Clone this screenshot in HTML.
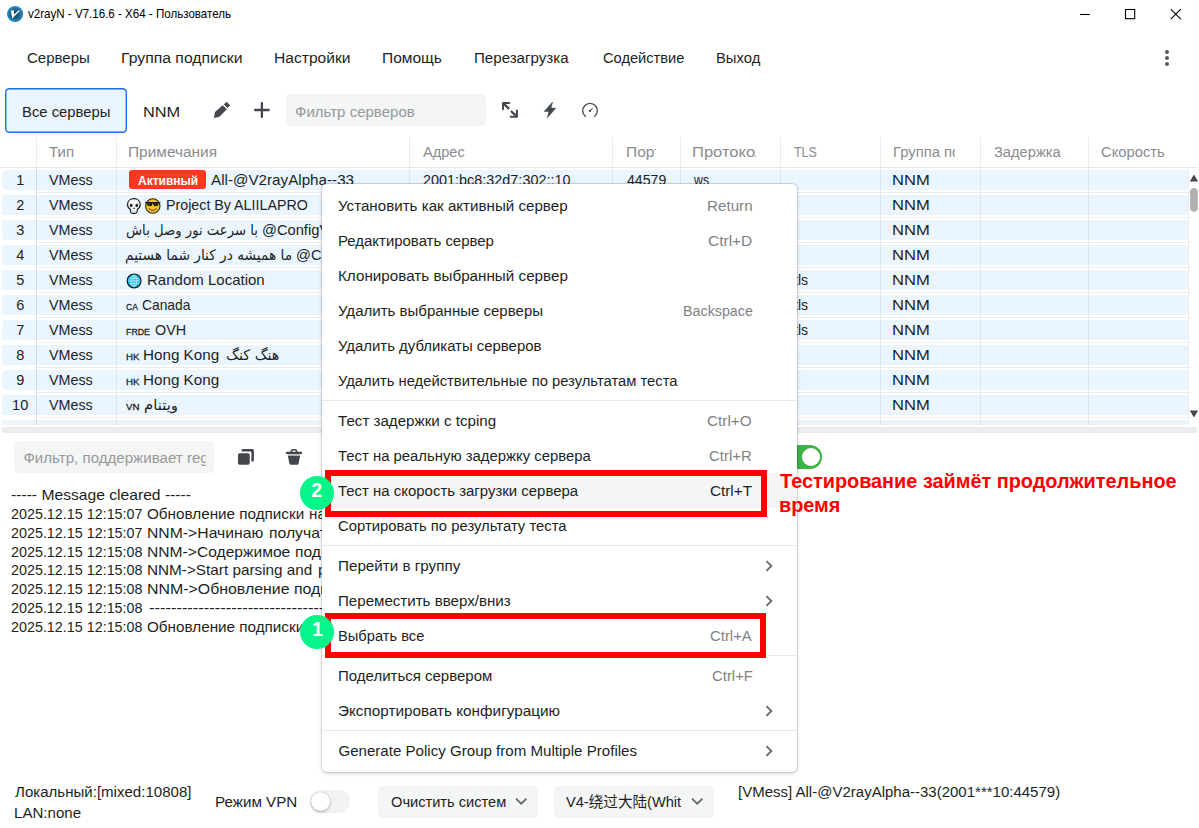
<!DOCTYPE html>
<html lang="ru"><head><meta charset="utf-8"><title>v2rayN</title>
<style>
html,body{margin:0;padding:0;}
body{width:1199px;height:828px;overflow:hidden;background:#fff;position:relative;font-family:"Liberation Sans", "DejaVu Sans", "Noto Sans CJK SC", sans-serif;color:#1c1f23;}
.t{position:absolute;white-space:nowrap;line-height:1;transform-origin:0 50%;}
.abs{position:absolute;}
.row{position:absolute;left:2px;width:1185.7px;height:19.9px;background:#eaf5ff;border-radius:3px;}
.hl{position:absolute;left:37px;width:1152px;height:1px;background:#ededee;}
.vl{position:absolute;top:137px;width:1px;height:30px;background:#ebebec;}
.clip{position:absolute;overflow:hidden;}
.mi{position:absolute;left:0;width:475px;height:35px;}
.sep{position:absolute;left:0;width:475px;height:1px;background:#e8e8e9;}
svg{position:absolute;overflow:visible;}
</style></head><body>
<svg style="left:6.9px;top:5.9px" width="16.2" height="16.2" viewBox="0 0 16.2 16.2"><defs><radialGradient id="g1" cx="50%" cy="50%" r="50%"><stop offset="0" stop-color="#123f5c"/><stop offset="0.55" stop-color="#1d628a"/><stop offset="1" stop-color="#2f93c8"/></radialGradient></defs><circle cx="8.1" cy="8.1" r="8.1" fill="url(#g1)"/><path d="M3.9 4.6 L7 4.3 L7 8.6 L11.6 4.4 L13.2 4.6 L5.2 12.6 Z" fill="#fff"/></svg><span class="t" style="left:27.70px;top:9.05px;font-size:11.90px;color:#000;transform:scaleX(0.9728);">v2rayN - V7.16.6 - X64 - Пользователь</span><svg style="left:1080px;top:9px" width="102" height="11"><path d="M0 5.5H10" stroke="#000" stroke-width="1.1" fill="none"/><rect x="45.5" y="0.5" width="9.2" height="9.2" stroke="#000" stroke-width="1.1" fill="none"/><path d="M90.8 0.2L100.8 10.2M100.8 0.2L90.8 10.2" stroke="#000" stroke-width="1.1" fill="none"/></svg><span class="t" style="left:27.00px;top:49.95px;font-size:15.10px;color:#1c1f23;transform:scaleX(0.9948);">Серверы</span><span class="t" style="left:120.95px;top:49.95px;font-size:15.10px;color:#1c1f23;transform:scaleX(1.0450);">Группа подписки</span><span class="t" style="left:273.97px;top:49.95px;font-size:15.10px;color:#1c1f23;transform:scaleX(1.0334);">Настройки</span><span class="t" style="left:381.97px;top:49.95px;font-size:15.10px;color:#1c1f23;transform:scaleX(1.0273);">Помощь</span><span class="t" style="left:474.00px;top:49.95px;font-size:15.10px;color:#1c1f23;">Перезагрузка</span><span class="t" style="left:602.50px;top:49.95px;font-size:15.10px;color:#1c1f23;transform:scaleX(0.9700);">Содействие</span><span class="t" style="left:715.52px;top:49.95px;font-size:15.10px;color:#1c1f23;transform:scaleX(0.9807);">Выход</span><svg style="left:1164px;top:49px" width="6" height="18"><circle cx="3" cy="3" r="2" fill="#555a60"/><circle cx="3" cy="9" r="2" fill="#555a60"/><circle cx="3" cy="15" r="2" fill="#555a60"/></svg><div class="abs" style="left:5.3px;top:88px;width:121.4px;height:45px;box-shadow:inset 0 0 0 1.4px #1a6cf0;border-radius:4.5px;background:#eaf5ff"></div><span class="t" style="left:21.52px;top:103.95px;font-size:15.10px;color:#1c1f23;transform:scaleX(0.9810);">Все серверы</span><span class="t" style="left:142.92px;top:103.95px;font-size:15.10px;color:#1c1f23;transform:scaleX(1.0823);">NNM</span><svg style="left:205px;top:92px" width="30" height="30" viewBox="205 92 30 30"><path fill="#43474c" d="M213.9 117.95L215 112.05L222.75 105.3L226.9 109.25L219.4 116.75Z"/><path fill="#43474c" stroke="#43474c" stroke-width="1" stroke-linejoin="round" d="M224.35 104.35L226.7 102.3L229.65 105.3L227.5 107.55Z"/></svg><svg style="left:253px;top:101px" width="18" height="18" viewBox="0 0 18 18"><path d="M2.1 9H15.7M8.9 2.1V15.9" stroke="#43474c" stroke-width="2.3" stroke-linecap="round" fill="none"/></svg><div class="abs" style="left:286px;top:94px;width:200px;height:31.5px;background:#f4f5f5;border-radius:4px"></div><span class="t" style="left:295.30px;top:103.95px;font-size:15.10px;color:#96999c;transform:scaleX(0.9953);">Фильтр серверов</span><svg style="left:498px;top:98px" width="24" height="24" viewBox="498 98 24 24"><g stroke="#43474c" fill="none" stroke-linejoin="round" stroke-linecap="round"><path d="M503.05 109.2V103.05H509.2" stroke-width="1.95"/><path d="M510.7 116.75H516.95V110.5" stroke-width="1.95"/><path d="M503.6 103.6L509.1 108.8M510.9 111L516.4 116.2" stroke-width="2.3" stroke-linecap="butt"/></g></svg><svg style="left:540px;top:100px" width="20" height="20" viewBox="540 100 20 20"><polygon fill="#43474c" stroke="#43474c" stroke-width="0.5" stroke-linejoin="round" points="552.6,102.1 544.1,111.4 548.9,111.5 547.3,117.8 555.8,108.2 551,108.1"/></svg><svg style="left:580px;top:100px" width="20" height="20" viewBox="580 100 20 20"><path d="M585.34 116.34A7.3 7.3 0 1 1 594.72 116.34" stroke="#43474c" stroke-width="1.35" fill="none" stroke-linecap="round"/><circle cx="589.9" cy="110.9" r="1.05" fill="#43474c"/><path d="M589.4 110.4L593.8 107L590.4 111.4Z" fill="#43474c"/></svg><span class="t" style="left:49.00px;top:144.55px;font-size:14.90px;color:#8a8c8f;transform:scaleX(1.0097);">Тип</span><span class="t" style="left:127.96px;top:144.55px;font-size:14.90px;color:#8a8c8f;transform:scaleX(1.0364);">Примечания</span><span class="t" style="left:422.70px;top:144.55px;font-size:14.90px;color:#8a8c8f;transform:scaleX(0.9795);">Адрес</span><div class="clip" style="left:620px;top:140px;width:36.3px;height:26px"><span class="t" style="left:5.66px;top:4.55px;font-size:14.90px;color:#8a8c8f;transform:scaleX(1.0413);">Порт</span></div><div class="clip" style="left:686px;top:140px;width:70px;height:26px"><span class="t" style="left:5.89px;top:4.55px;font-size:14.90px;color:#8a8c8f;transform:scaleX(1.1101);">Протокол</span></div><span class="t" style="left:793.70px;top:144.55px;font-size:14.90px;color:#8a8c8f;transform:scaleX(0.8365);">TLS</span><div class="clip" style="left:886px;top:140px;width:68.7px;height:26px"><span class="t" style="left:6.61px;top:4.55px;font-size:14.90px;color:#8a8c8f;transform:scaleX(0.9949);">Группа подписки</span></div><span class="t" style="left:993.60px;top:144.55px;font-size:14.90px;color:#8a8c8f;transform:scaleX(0.9864);">Задержка</span><span class="t" style="left:1101.00px;top:144.55px;font-size:14.90px;color:#8a8c8f;transform:scaleX(0.9916);">Скорость</span><div class="hl" style="top:166.7px;background:#e6e7e8;left:0;width:1198px"></div><div class="vl" style="left:36px"></div><div class="vl" style="left:116px"></div><div class="vl" style="left:409px"></div><div class="vl" style="left:612px"></div><div class="vl" style="left:680px"></div><div class="vl" style="left:780px"></div><div class="vl" style="left:880px"></div><div class="vl" style="left:980px"></div><div class="vl" style="left:1088px"></div><div class="clip" style="left:0;top:168px;width:1189.5px;height:256.8px"><div class="row" style="top:2.0px"></div><div class="hl" style="top:24.0px"></div><div class="row" style="top:27.0px"></div><div class="hl" style="top:49.0px"></div><div class="row" style="top:52.0px"></div><div class="hl" style="top:74.0px"></div><div class="row" style="top:77.0px"></div><div class="hl" style="top:99.0px"></div><div class="row" style="top:102.0px"></div><div class="hl" style="top:124.0px"></div><div class="row" style="top:127.0px"></div><div class="hl" style="top:149.0px"></div><div class="row" style="top:152.0px"></div><div class="hl" style="top:174.0px"></div><div class="row" style="top:177.0px"></div><div class="hl" style="top:199.0px"></div><div class="row" style="top:202.0px"></div><div class="hl" style="top:224.0px"></div><div class="row" style="top:227.0px"></div><div class="hl" style="top:249.0px"></div><div class="row" style="top:252.0px"></div><div class="hl" style="top:274.0px"></div><div class="abs" style="left:36px;top:0;width:1px;height:258px;background:rgba(28,31,35,0.13)"></div><div class="abs" style="left:116px;top:0;width:1px;height:258px;background:rgba(28,31,35,0.07)"></div><div class="abs" style="left:409px;top:0;width:1px;height:258px;background:rgba(28,31,35,0.07)"></div><div class="abs" style="left:612px;top:0;width:1px;height:258px;background:rgba(28,31,35,0.07)"></div><div class="abs" style="left:680px;top:0;width:1px;height:258px;background:rgba(28,31,35,0.07)"></div><div class="abs" style="left:780px;top:0;width:1px;height:258px;background:rgba(28,31,35,0.07)"></div><div class="abs" style="left:880px;top:0;width:1px;height:258px;background:rgba(28,31,35,0.07)"></div><div class="abs" style="left:980px;top:0;width:1px;height:258px;background:rgba(28,31,35,0.07)"></div><div class="abs" style="left:1088px;top:0;width:1px;height:258px;background:rgba(28,31,35,0.07)"></div><div class="abs" style="left:1188px;top:0;width:1px;height:258px;background:rgba(28,31,35,0.09)"></div><span class="t" style="left:0.20px;top:4.75px;font-size:14.50px;color:#1c1f23;width:40px;text-align:center;">1</span><span class="t" style="left:49.00px;top:4.75px;font-size:14.50px;color:#1c1f23;transform:scaleX(0.9872);">VMess</span><span class="t" style="left:892.46px;top:4.75px;font-size:14.50px;color:#1c1f23;transform:scaleX(1.1440);">NNM</span><span class="t" style="left:0.20px;top:29.75px;font-size:14.50px;color:#1c1f23;width:40px;text-align:center;">2</span><span class="t" style="left:49.00px;top:29.75px;font-size:14.50px;color:#1c1f23;transform:scaleX(0.9872);">VMess</span><span class="t" style="left:892.46px;top:29.75px;font-size:14.50px;color:#1c1f23;transform:scaleX(1.1440);">NNM</span><span class="t" style="left:0.20px;top:54.75px;font-size:14.50px;color:#1c1f23;width:40px;text-align:center;">3</span><span class="t" style="left:49.00px;top:54.75px;font-size:14.50px;color:#1c1f23;transform:scaleX(0.9872);">VMess</span><span class="t" style="left:892.46px;top:54.75px;font-size:14.50px;color:#1c1f23;transform:scaleX(1.1440);">NNM</span><span class="t" style="left:0.20px;top:79.75px;font-size:14.50px;color:#1c1f23;width:40px;text-align:center;">4</span><span class="t" style="left:49.00px;top:79.75px;font-size:14.50px;color:#1c1f23;transform:scaleX(0.9872);">VMess</span><span class="t" style="left:892.46px;top:79.75px;font-size:14.50px;color:#1c1f23;transform:scaleX(1.1440);">NNM</span><span class="t" style="left:0.20px;top:104.75px;font-size:14.50px;color:#1c1f23;width:40px;text-align:center;">5</span><span class="t" style="left:49.00px;top:104.75px;font-size:14.50px;color:#1c1f23;transform:scaleX(0.9872);">VMess</span><span class="t" style="left:892.46px;top:104.75px;font-size:14.50px;color:#1c1f23;transform:scaleX(1.1440);">NNM</span><span class="t" style="left:793.70px;top:104.75px;font-size:14.50px;color:#1c1f23;transform:scaleX(0.9684);">tls</span><span class="t" style="left:0.20px;top:129.75px;font-size:14.50px;color:#1c1f23;width:40px;text-align:center;">6</span><span class="t" style="left:49.00px;top:129.75px;font-size:14.50px;color:#1c1f23;transform:scaleX(0.9872);">VMess</span><span class="t" style="left:892.46px;top:129.75px;font-size:14.50px;color:#1c1f23;transform:scaleX(1.1440);">NNM</span><span class="t" style="left:793.70px;top:129.75px;font-size:14.50px;color:#1c1f23;transform:scaleX(0.9684);">tls</span><span class="t" style="left:0.20px;top:154.75px;font-size:14.50px;color:#1c1f23;width:40px;text-align:center;">7</span><span class="t" style="left:49.00px;top:154.75px;font-size:14.50px;color:#1c1f23;transform:scaleX(0.9872);">VMess</span><span class="t" style="left:892.46px;top:154.75px;font-size:14.50px;color:#1c1f23;transform:scaleX(1.1440);">NNM</span><span class="t" style="left:793.70px;top:154.75px;font-size:14.50px;color:#1c1f23;transform:scaleX(0.9684);">tls</span><span class="t" style="left:0.20px;top:179.75px;font-size:14.50px;color:#1c1f23;width:40px;text-align:center;">8</span><span class="t" style="left:49.00px;top:179.75px;font-size:14.50px;color:#1c1f23;transform:scaleX(0.9872);">VMess</span><span class="t" style="left:892.46px;top:179.75px;font-size:14.50px;color:#1c1f23;transform:scaleX(1.1440);">NNM</span><span class="t" style="left:0.20px;top:204.75px;font-size:14.50px;color:#1c1f23;width:40px;text-align:center;">9</span><span class="t" style="left:49.00px;top:204.75px;font-size:14.50px;color:#1c1f23;transform:scaleX(0.9872);">VMess</span><span class="t" style="left:892.46px;top:204.75px;font-size:14.50px;color:#1c1f23;transform:scaleX(1.1440);">NNM</span><span class="t" style="left:0.20px;top:229.75px;font-size:14.50px;color:#1c1f23;width:40px;text-align:center;">10</span><span class="t" style="left:49.00px;top:229.75px;font-size:14.50px;color:#1c1f23;transform:scaleX(0.9872);">VMess</span><span class="t" style="left:892.46px;top:229.75px;font-size:14.50px;color:#1c1f23;transform:scaleX(1.1440);">NNM</span><span class="t" style="left:0.20px;top:254.75px;font-size:14.50px;color:#1c1f23;width:40px;text-align:center;">11</span><span class="t" style="left:49.00px;top:254.75px;font-size:14.50px;color:#1c1f23;transform:scaleX(0.9872);">VMess</span><span class="t" style="left:892.46px;top:254.75px;font-size:14.50px;color:#1c1f23;transform:scaleX(1.1440);">NNM</span><div class="abs" style="left:129.3px;top:2.3px;width:76.8px;height:19.2px;background:#f93920;border-radius:3px"></div><span class="t" style="left:138.00px;top:6.80px;font-size:12.40px;color:#fff;font-weight:700;transform:scaleX(0.9672);">Активный</span><span class="t" style="left:211.00px;top:4.75px;font-size:14.50px;color:#1c1f23;transform:scaleX(1.0488);">All-@V2rayAlpha--33</span><span class="t" style="left:423.30px;top:4.75px;font-size:14.50px;color:#1c1f23;transform:scaleX(0.9940);">2001:bc8:32d7:302::10</span><span class="t" style="left:626.70px;top:4.75px;font-size:14.50px;color:#1c1f23;transform:scaleX(0.9762);">44579</span><span class="t" style="left:694.15px;top:4.75px;font-size:14.50px;color:#1c1f23;transform:scaleX(0.8500);">ws</span><svg style="left:120px;top:24px" width="50" height="25" viewBox="120 192 50 25"><path d="M133.85 198.6C129.9 198.6 127.5 201.3 127.5 204.6C127.5 206.6 128.5 208.2 130.2 209.2L130.7 212C130.8 212.8 131.4 213.3 132.2 213.3H135.5C136.3 213.3 136.9 212.8 137 212L137.5 209.2C139.2 208.2 140.2 206.6 140.2 204.6C140.2 201.3 137.8 198.6 133.85 198.6Z" fill="#f4f4f4" stroke="#1d1d1d" stroke-width="1.2"/><path d="M131.6 211.2H136.1V213H131.6Z" fill="#c9c9c9"/><ellipse cx="131.2" cy="205.4" rx="1.35" ry="1.7" fill="#111"/><ellipse cx="136.8" cy="205.4" rx="1.35" ry="1.7" fill="#111"/><path d="M134.1 207.3L133.3 208.9H134.9Z" fill="#111"/>
<circle cx="152.8" cy="206" r="7.2" fill="#f7c232" stroke="#2a2208" stroke-width="1.1"/><path d="M145.2 201.9H160.4V203.1H158.6L158.2 205C158 205.6 157.6 205.9 157 205.9H154.6C154 205.9 153.6 205.6 153.5 205L153.2 203.4H152.4L152.1 205C152 205.6 151.6 205.9 151 205.9H148.6C148 205.9 147.6 205.6 147.4 205L147 203.1H145.2Z" fill="#15171a"/><path d="M148.6 203.3L150 204.8M155 203.3L156.4 204.8" stroke="#8f9499" stroke-width="0.7"/><path d="M149.3 208.6C150.2 209.9 151.4 210.4 152.8 210.4C154.2 210.4 155.4 209.9 156.3 208.6" stroke="#7a5410" stroke-width="1.1" fill="none" stroke-linecap="round"/></svg><span class="t" style="left:165.92px;top:29.75px;font-size:14.50px;color:#1c1f23;transform:scaleX(0.9828);">Project By ALIILAPRO</span><span class="t" style="left:125.80px;top:54.75px;font-size:14.50px;color:#1c1f23;font-family:'DejaVu Sans', 'Liberation Sans', sans-serif;transform:scaleX(0.9105);direction:rtl;">با سرعت نور وصل باش</span><span class="t" style="left:261.69px;top:54.75px;font-size:14.50px;color:#1c1f23;transform:scaleX(1.0132);">@ConfigV2rayNG</span><span class="t" style="left:125.40px;top:79.75px;font-size:14.50px;color:#1c1f23;font-family:'DejaVu Sans', 'Liberation Sans', sans-serif;transform:scaleX(0.9467);direction:rtl;">ما همیشه در کنار شما هستیم</span><span class="t" style="left:295.99px;top:79.75px;font-size:14.50px;color:#1c1f23;transform:scaleX(1.0106);">@ConfigV2rayNG</span><svg style="left:120px;top:99px" width="50" height="25" viewBox="120 267 50 25"><circle cx="134.1" cy="280.9" r="6.9" fill="#25bff0" stroke="#14181c" stroke-width="1.2"/><g stroke="#d9f5ff" stroke-width="0.75" fill="none" opacity="0.9"><ellipse cx="134.1" cy="280.9" rx="2.6" ry="5.6"/><path d="M134.1 275.3V286.5M128.5 280.9H139.7M129.4 278.2H138.8M129.4 283.6H138.8"/></g></svg><span class="t" style="left:146.86px;top:104.75px;font-size:14.50px;color:#1c1f23;transform:scaleX(1.0356);">Random Location</span><span class="t" style="left:125.60px;top:133.60px;font-size:9.80px;color:#1c1f23;transform:scaleX(0.8739);-webkit-text-stroke:0.3px #1c1f23;">CA</span><span class="t" style="left:142.00px;top:129.75px;font-size:14.50px;color:#1c1f23;transform:scaleX(0.9531);">Canada</span><span class="t" style="left:125.60px;top:158.60px;font-size:9.80px;color:#1c1f23;transform:scaleX(0.8992);-webkit-text-stroke:0.3px #1c1f23;">FRDE</span><span class="t" style="left:154.60px;top:154.75px;font-size:14.50px;color:#1c1f23;transform:scaleX(0.9887);">OVH</span><span class="t" style="left:125.60px;top:183.60px;font-size:9.80px;color:#1c1f23;transform:scaleX(0.9805);-webkit-text-stroke:0.3px #1c1f23;">HK</span><span class="t" style="left:143.45px;top:179.75px;font-size:14.50px;color:#1c1f23;transform:scaleX(1.0491);">Hong Kong</span><span class="t" style="left:225.60px;top:179.75px;font-size:14.50px;color:#1c1f23;font-family:'DejaVu Sans', 'Liberation Sans', sans-serif;transform:scaleX(0.9921);direction:rtl;">هنگ کنگ</span><span class="t" style="left:125.60px;top:208.60px;font-size:9.80px;color:#1c1f23;transform:scaleX(0.9805);-webkit-text-stroke:0.3px #1c1f23;">HK</span><span class="t" style="left:143.45px;top:204.75px;font-size:14.50px;color:#1c1f23;transform:scaleX(1.0491);">Hong Kong</span><span class="t" style="left:125.60px;top:233.60px;font-size:9.80px;color:#1c1f23;transform:scaleX(0.9901);-webkit-text-stroke:0.3px #1c1f23;">VN</span><span class="t" style="left:144.00px;top:229.75px;font-size:14.50px;color:#1c1f23;font-family:'DejaVu Sans', 'Liberation Sans', sans-serif;transform:scaleX(1.0254);direction:rtl;">ویتنام</span></div><svg style="left:1188px;top:168px" width="11" height="258" viewBox="1188 168 11 258"><path d="M1189.8 181.4L1193.95 174.4L1198.1 181.4Z" fill="#43474c"/><rect x="1190.1" y="187.9" width="7.7" height="23.9" rx="3.8" fill="#b0b1b3"/><path d="M1189.8 410.4L1193.95 417.4L1198.1 410.4Z" fill="#43474c"/></svg><div class="abs" style="left:2px;top:427px;width:1195px;height:6px;background:#ececec"></div><div class="abs" style="left:14px;top:441.3px;width:200px;height:31.6px;background:#f4f5f5;border-radius:4px"></div><div class="clip" style="left:20px;top:445px;width:185.5px;height:26px"><span class="t" style="left:3.40px;top:5.25px;font-size:15.10px;color:#96999c;">Фильтр, поддерживает regex</span></div><svg style="left:230px;top:440px" width="30" height="30" viewBox="230 440 30 30"><path d="M242.6 449H252.3C253.2 449 253.9 449.7 253.9 450.6V460.6C253.9 461.3 253.2 461.8 251.4 461.8V452.8C251.4 452 251 451.5 250.2 451.5H241.5C241.5 449.8 241.9 449 242.6 449Z" fill="#43474c"/><rect x="238" y="453.2" width="11.7" height="11.6" rx="1.7" fill="#43474c"/></svg><svg style="left:280px;top:440px" width="30" height="30" viewBox="280 440 30 30"><path d="M290.2 452L291.4 449.5C291.5 449.2 291.8 449 292.1 449H295.9C296.2 449 296.5 449.2 296.6 449.5L297.8 452H296L295.4 450.6H292.6L292 452Z" fill="#43474c"/><rect x="285.9" y="451.8" width="16.2" height="2.3" rx="0.8" fill="#43474c"/><path d="M287.8 455.5H300.2L298.6 463.6C298.4 464.4 297.9 464.8 297.2 464.8H290.8C290.1 464.8 289.6 464.4 289.4 463.6Z" fill="#43474c"/><rect x="287.9" y="454.1" width="12.2" height="1.4" fill="#b9bbbd"/></svg><div class="abs" style="left:780px;top:445.4px;width:42px;height:23.2px;border-radius:12px;background:#3bb346"></div><div class="abs" style="left:801.6px;top:447.6px;width:18.8px;height:18.8px;border-radius:50%;background:#fff"></div><span class="t" style="left:10.50px;top:487.60px;font-size:14.80px;color:#1c1f23;transform:scaleX(1.0573);">----- Message cleared -----</span><span class="t" style="left:10.50px;top:506.60px;font-size:14.80px;color:#1c1f23;transform:scaleX(0.9687);">2025.12.15 12:15:07</span><span class="t" style="left:147.30px;top:506.60px;font-size:14.80px;color:#1c1f23;transform:scaleX(1.0306);">Обновление подписки</span><span class="t" style="left:308.67px;top:506.60px;font-size:14.80px;color:#1c1f23;transform:scaleX(1.0306);">на</span><span class="t" style="left:10.50px;top:525.60px;font-size:14.80px;color:#1c1f23;transform:scaleX(0.9687);">2025.12.15 12:15:07</span><span class="t" style="left:146.74px;top:525.60px;font-size:14.80px;color:#1c1f23;transform:scaleX(1.0635);">NNM-&gt;Начинаю</span><span class="t" style="left:268.64px;top:525.60px;font-size:14.80px;color:#1c1f23;transform:scaleX(1.0635);">получать</span><span class="t" style="left:10.50px;top:544.60px;font-size:14.80px;color:#1c1f23;transform:scaleX(0.9687);">2025.12.15 12:15:08</span><span class="t" style="left:146.74px;top:544.60px;font-size:14.80px;color:#1c1f23;transform:scaleX(1.0556);">NNM-&gt;Содержимое</span><span class="t" style="left:294.84px;top:544.60px;font-size:14.80px;color:#1c1f23;transform:scaleX(1.0556);">подписки</span><span class="t" style="left:10.50px;top:562.60px;font-size:14.80px;color:#1c1f23;transform:scaleX(0.9687);">2025.12.15 12:15:08</span><span class="t" style="left:146.77px;top:562.60px;font-size:14.80px;color:#1c1f23;transform:scaleX(1.0339);">NNM-&gt;Start parsing and</span><span class="t" style="left:317.50px;top:562.60px;font-size:14.80px;color:#1c1f23;transform:scaleX(1.0339);">processing</span><span class="t" style="left:10.50px;top:581.60px;font-size:14.80px;color:#1c1f23;transform:scaleX(0.9687);">2025.12.15 12:15:08</span><span class="t" style="left:146.73px;top:581.60px;font-size:14.80px;color:#1c1f23;transform:scaleX(1.0740);">NNM-&gt;Обновление</span><span class="t" style="left:293.93px;top:581.60px;font-size:14.80px;color:#1c1f23;transform:scaleX(1.0740);">подписки</span><span class="t" style="left:10.50px;top:600.60px;font-size:14.80px;color:#1c1f23;transform:scaleX(0.9687);">2025.12.15 12:15:08</span><span class="t" style="left:148.60px;top:600.60px;font-size:14.80px;color:#1c1f23;transform:scaleX(1.1121);">----------------------------------</span><span class="t" style="left:10.50px;top:619.60px;font-size:14.80px;color:#1c1f23;transform:scaleX(0.9687);">2025.12.15 12:15:08</span><span class="t" style="left:147.30px;top:619.60px;font-size:14.80px;color:#1c1f23;transform:scaleX(1.0306);">Обновление подписки</span><span class="t" style="left:309.70px;top:619.60px;font-size:14.80px;color:#1c1f23;transform:scaleX(1.0306);">завершено</span><span class="t" style="left:15.20px;top:784.55px;font-size:14.90px;color:#1c1f23;transform:scaleX(1.0109);">Локальный:[mixed:10808]</span><span class="t" style="left:14.19px;top:805.55px;font-size:14.90px;color:#1c1f23;transform:scaleX(1.0131);">LAN:none</span><span class="t" style="left:214.98px;top:794.55px;font-size:14.90px;color:#1c1f23;transform:scaleX(1.0202);">Режим VPN</span><div class="abs" style="left:310px;top:790.2px;width:39.6px;height:23px;border-radius:12px;background:#f2f2f3"></div><div class="abs" style="left:311px;top:792.2px;width:19.2px;height:19.2px;border-radius:50%;background:#fff;box-shadow:0 0 1px rgba(0,0,0,.35),0 1.5px 3px rgba(0,0,0,.22)"></div><div class="abs" style="left:377.5px;top:786px;width:160px;height:31.6px;background:#f4f5f5;border-radius:4px"></div><span class="t" style="left:391.00px;top:794.55px;font-size:14.90px;color:#1c1f23;transform:scaleX(0.9821);">Очистить систем</span><svg style="left:514px;top:796px" width="14" height="10"><path d="M2 2.6L7.2 7.6L12.4 2.6" stroke="#666a70" stroke-width="1.9" fill="none"/></svg><div class="abs" style="left:554.3px;top:786px;width:159.5px;height:31.6px;background:#f4f5f5;border-radius:4px"></div><span class="t" style="left:566.00px;top:794.55px;font-size:14.90px;color:#1c1f23;transform:scaleX(0.9802);">V4-绕过大陆(Whit</span><svg style="left:690px;top:796px" width="14" height="10"><path d="M2 2.6L7.2 7.6L12.4 2.6" stroke="#666a70" stroke-width="1.9" fill="none"/></svg><span class="t" style="left:737.99px;top:784.55px;font-size:14.90px;color:#1c1f23;transform:scaleX(1.0076);">[VMess] All-@V2rayAlpha--33(2001***10:44579)</span><div class="abs" style="left:322px;top:184px;width:475px;height:588px;background:#fff;border-radius:5px;box-shadow:0 0 0 0.7px rgba(0,0,0,.14),0 1.5px 4px rgba(0,0,0,.13),0 0 3px rgba(0,0,0,.07)"><span class="t" style="left:16.30px;top:13.95px;font-size:15.10px;color:#1c1f23;transform:scaleX(1.0032);">Установить как активный сервер</span><span class="t" style="left:384.99px;top:13.95px;font-size:15.10px;color:#808386;transform:scaleX(1.0066);">Return</span><span class="t" style="left:16.01px;top:48.95px;font-size:15.10px;color:#1c1f23;transform:scaleX(0.9902);">Редактировать сервер</span><span class="t" style="left:385.80px;top:48.95px;font-size:15.10px;color:#808386;transform:scaleX(1.0257);">Ctrl+D</span><span class="t" style="left:15.99px;top:83.95px;font-size:15.10px;color:#1c1f23;transform:scaleX(1.0083);">Клонировать выбранный сервер</span><span class="t" style="left:16.30px;top:118.95px;font-size:15.10px;color:#1c1f23;transform:scaleX(0.9951);">Удалить выбранные серверы</span><span class="t" style="left:360.65px;top:118.95px;font-size:15.10px;color:#808386;transform:scaleX(0.9470);">Backspace</span><span class="t" style="left:16.30px;top:153.95px;font-size:15.10px;color:#1c1f23;transform:scaleX(0.9880);">Удалить дубликаты серверов</span><span class="t" style="left:16.30px;top:188.95px;font-size:15.10px;color:#1c1f23;transform:scaleX(0.9788);">Удалить недействительные по результатам теста</span><span class="t" style="left:16.30px;top:228.95px;font-size:15.10px;color:#1c1f23;transform:scaleX(1.0027);">Тест задержки с tcping</span><span class="t" style="left:385.30px;top:228.95px;font-size:15.10px;color:#808386;transform:scaleX(1.0138);">Ctrl+O</span><span class="t" style="left:16.30px;top:263.95px;font-size:15.10px;color:#1c1f23;transform:scaleX(0.9857);">Тест на реальную задержку сервера</span><span class="t" style="left:387.30px;top:263.95px;font-size:15.10px;color:#808386;transform:scaleX(0.9910);">Ctrl+R</span><div class="mi" style="top:289px;background:#f4f5f5"></div><span class="t" style="left:16.30px;top:298.95px;font-size:15.10px;color:#1c1f23;transform:scaleX(0.9902);">Тест на скорость загрузки сервера</span><span class="t" style="left:388.40px;top:298.95px;font-size:15.10px;color:#1c1f23;transform:scaleX(1.0124);">Ctrl+T</span><span class="t" style="left:16.10px;top:333.95px;font-size:15.10px;color:#1c1f23;transform:scaleX(0.9832);">Сортировать по результату теста</span><span class="t" style="left:15.99px;top:373.95px;font-size:15.10px;color:#1c1f23;transform:scaleX(1.0071);">Перейти в группу</span><svg style="left:442.0px;top:374.5px" width="10" height="14"><path d="M2.4 2.2L7.4 7L2.4 11.8" stroke="#666a70" stroke-width="1.8" fill="none"/></svg><span class="t" style="left:16.00px;top:408.95px;font-size:15.10px;color:#1c1f23;">Переместить вверх/вниз</span><svg style="left:442.0px;top:409.5px" width="10" height="14"><path d="M2.4 2.2L7.4 7L2.4 11.8" stroke="#666a70" stroke-width="1.8" fill="none"/></svg><span class="t" style="left:16.03px;top:443.95px;font-size:15.10px;color:#1c1f23;transform:scaleX(0.9727);">Выбрать все</span><span class="t" style="left:387.50px;top:443.95px;font-size:15.10px;color:#808386;transform:scaleX(0.9864);">Ctrl+A</span><span class="t" style="left:16.01px;top:483.95px;font-size:15.10px;color:#1c1f23;transform:scaleX(0.9941);">Поделиться сервером</span><span class="t" style="left:389.50px;top:483.95px;font-size:15.10px;color:#808386;transform:scaleX(0.9858);">Ctrl+F</span><span class="t" style="left:16.40px;top:518.95px;font-size:15.10px;color:#1c1f23;transform:scaleX(1.0123);">Экспортировать конфигурацию</span><svg style="left:442.0px;top:519.5px" width="10" height="14"><path d="M2.4 2.2L7.4 7L2.4 11.8" stroke="#666a70" stroke-width="1.8" fill="none"/></svg><span class="t" style="left:16.40px;top:558.95px;font-size:15.10px;color:#1c1f23;">Generate Policy Group from Multiple Profiles</span><svg style="left:442.0px;top:559.5px" width="10" height="14"><path d="M2.4 2.2L7.4 7L2.4 11.8" stroke="#666a70" stroke-width="1.8" fill="none"/></svg><div class="sep" style="top:216.0px"></div><div class="sep" style="top:361.0px"></div><div class="sep" style="top:471.0px"></div><div class="sep" style="top:546.0px"></div></div><div class="abs" style="left:325px;top:470.2px;width:442px;height:46.5px;border:6px solid #ff0000;box-sizing:border-box"></div><div class="abs" style="left:325px;top:613.2px;width:441px;height:44.6px;border:6px solid #ff0000;box-sizing:border-box"></div><div class="abs" style="left:299.7px;top:475.5px;width:34px;height:34px;border-radius:50%;background:#04f58a"></div><span class="t" style="left:311.30px;top:481.25px;font-size:19.50px;color:#fff;font-weight:700;">2</span><div class="abs" style="left:300.4px;top:614.5px;width:34px;height:34px;border-radius:50%;background:#04f58a"></div><span class="t" style="left:312.00px;top:620.25px;font-size:19.50px;color:#fff;font-weight:700;">1</span><span class="t" style="left:780.30px;top:472.25px;font-size:19.50px;color:#ff0000;font-weight:700;transform:scaleX(1.0181);">Тестирование займёт продолжительное</span><span class="t" style="left:779.28px;top:496.25px;font-size:19.50px;color:#ff0000;font-weight:700;transform:scaleX(1.0185);">время</span></body></html>
